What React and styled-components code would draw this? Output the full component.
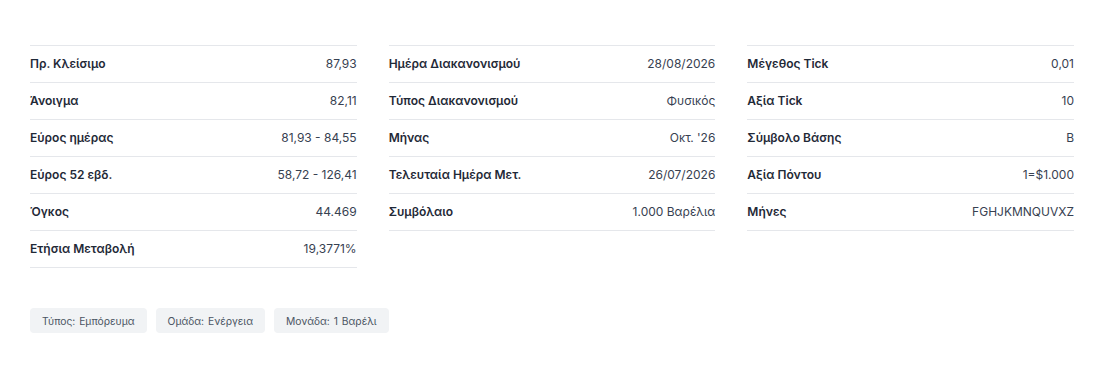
import styled, { createGlobalStyle } from "styled-components";

const GlobalStyle = createGlobalStyle`
  body {
    margin: 0;
    background: #ffffff;
    font-family: Inter, "Noto Sans", sans-serif;
  }
`;

const Page = styled.div`
  padding: 45px 35px 40px 30px;
`;

const Grid = styled.div`
  display: grid;
  grid-template-columns: repeat(3, 1fr);
  column-gap: 32px;
  align-items: start;
`;

const Column = styled.div`
  display: flex;
  flex-direction: column;
  border-top: 1px solid #e5e7eb;
`;

const Row = styled.div`
  display: flex;
  align-items: center;
  justify-content: space-between;
  box-sizing: border-box;
  height: 37px;
  padding-bottom: 1px;
  border-bottom: 1px solid #e5e7eb;
  font-size: 12px;
`;

const Label = styled.span`
  font-weight: 600;
  color: #1f2937;
`;

const Value = styled.span`
  font-weight: 400;
  color: #374151;
`;

const Tags = styled.div`
  display: flex;
  gap: 9px;
  margin-top: 40px;
`;

const Tag = styled.span`
  display: inline-flex;
  align-items: center;
  height: 25px;
  padding: 0 12px;
  border-radius: 4px;
  background: #f1f3f5;
  color: #4b5563;
  font-size: 10.3px;
  word-spacing: 1px;
`;

const columns = [
  [
    ["Πρ. Κλείσιμο", "87,93"],
    ["Άνοιγμα", "82,11"],
    ["Εύρος ημέρας", "81,93 - 84,55"],
    ["Εύρος 52 εβδ.", "58,72 - 126,41"],
    ["Όγκος", "44.469"],
    ["Ετήσια Μεταβολή", "19,3771%"],
  ],
  [
    ["Ημέρα Διακανονισμού", "28/08/2026"],
    ["Τύπος Διακανονισμού", "Φυσικός"],
    ["Μήνας", "Οκτ. '26"],
    ["Τελευταία Ημέρα Μετ.", "26/07/2026"],
    ["Συμβόλαιο", "1.000 Βαρέλια"],
  ],
  [
    ["Μέγεθος Tick", "0,01"],
    ["Αξία Tick", "10"],
    ["Σύμβολο Βάσης", "B"],
    ["Αξία Πόντου", "1=$1.000"],
    ["Μήνες", "FGHJKMNQUVXZ"],
  ],
];

const tags = ["Τύπος: Εμπόρευμα", "Ομάδα: Ενέργεια", "Μονάδα: 1 Βαρέλι"];

export default function App() {
  return (
    <>
      <GlobalStyle />
      <Page>
        <Grid>
          {columns.map((col, i) => (
            <Column key={i}>
              {col.map(([label, value]) => (
                <Row key={label}>
                  <Label>{label}</Label>
                  <Value>{value}</Value>
                </Row>
              ))}
            </Column>
          ))}
        </Grid>
        <Tags>
          {tags.map((t) => (
            <Tag key={t}>{t}</Tag>
          ))}
        </Tags>
      </Page>
    </>
  );
}
